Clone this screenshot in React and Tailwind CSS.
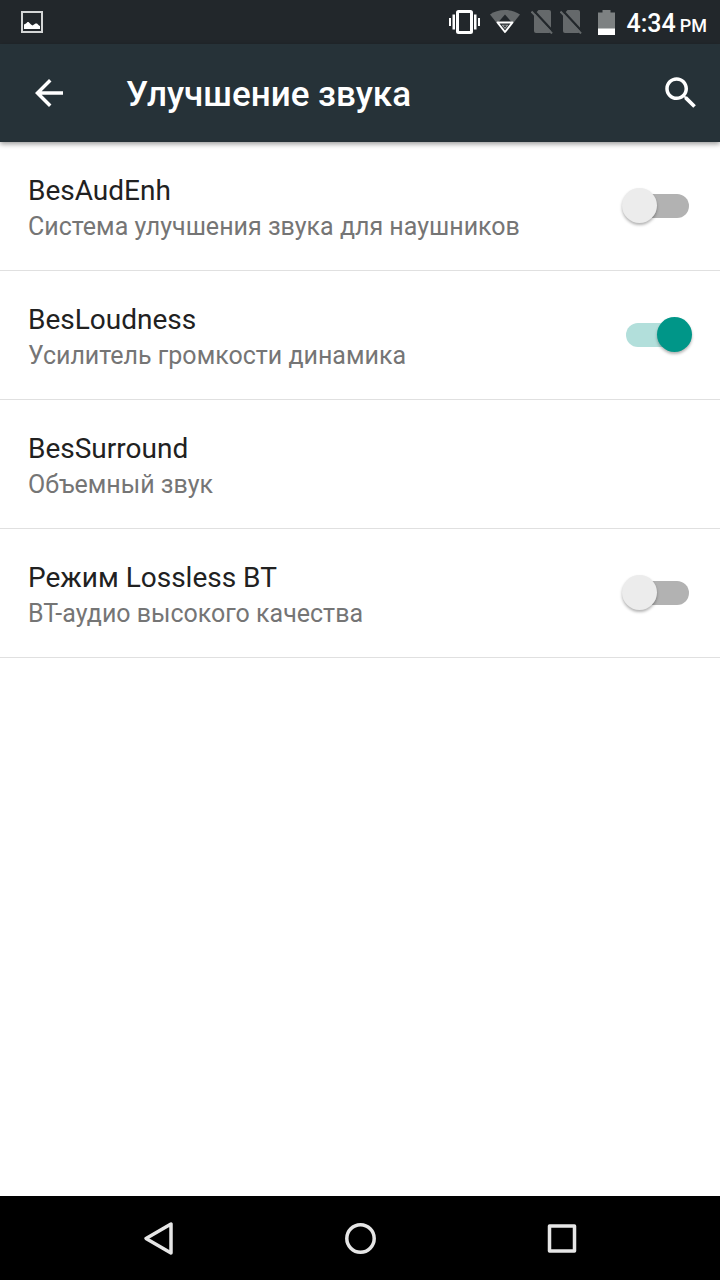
import React, { useState } from "react";

function PictureIcon() {
  return (
    <svg width="22" height="22" viewBox="0 0 22 22" aria-hidden="true">
      <rect x="1" y="1" width="20" height="20" fill="none" stroke="#d4d6d6" strokeWidth="2" />
      <path d="M3 18V13.500l2-1 1.500-1.500h1l2.500 2.500 1.500 1 3-2h1.500l2 2 1 0.500v3z" fill="#fff" />
    </svg>
  );
}

function VibrateIcon() {
  return (
    <svg width="32" height="24" viewBox="0 0 32 24" aria-hidden="true">
      <rect x="8.500" y="1.500" width="14" height="21" rx="1" fill="none" stroke="#fff" strokeWidth="3" />
      <path d="M0 8h2v8H0zM3.500 4.500H6v15H3.500zM25 4.500h2.500v15H25zM29 8h2v8h-2z" fill="#fff" />
    </svg>
  );
}

function WifiIcon() {
  return (
    <svg width="30" height="24" viewBox="0 0 30 24" aria-hidden="true">
      <path d="M0 4.500C4 1.500 9 0 15 0s11 1.500 15 4.500L15 23.500z" fill="#65696b" />
      <path d="M15 4.500l6.500 7.500H24L15 24 6 12h2.500z" fill="#22272b" />
      <path d="M7.500 12.500h15L15 22z" fill="none" stroke="#fff" strokeWidth="2" strokeLinejoin="round" />
      <path d="M11.500 14.800h7L15 19z" fill="#a9acad" />
      <path d="M13.300 15.600h3.400L15 17.500z" fill="#22272b" />
    </svg>
  );
}

function NoSimIcon() {
  return (
    <svg width="22" height="24" viewBox="0 0 22 24" aria-hidden="true">
      <path d="M7.500 0H18q2 0 2 2v19q0 2-2 2H5q-2 0-2-2V5z" fill="#65696b" />
      <path d="M2 0l20 21.500" stroke="#22272b" strokeWidth="2.500" />
      <path d="M0.500 1.500l20.500 22" stroke="#65696b" strokeWidth="2" />
    </svg>
  );
}

function BatteryIcon() {
  return (
    <svg width="17" height="25" viewBox="0 0 17 25" aria-hidden="true">
      <path d="M4.500 0h8v2.500H17V25H0V2.500h4.500z" fill="#7d8182" />
      <path d="M0 18.500h17V25H0z" fill="#fff" />
    </svg>
  );
}

function StatusBar() {
  return (
    <div className="flex h-11 items-center justify-between bg-[#22272b] pl-[21px] pr-[13px] text-white">
      <PictureIcon />
      <div className="flex items-center">
        <VibrateIcon />
        <span className="ml-[9px] flex"><WifiIcon /></span>
        <span className="ml-[11px] flex gap-[7px]">
          <NoSimIcon />
          <NoSimIcon />
        </span>
        <span className="ml-4 flex"><BatteryIcon /></span>
        <span className="ml-3 flex items-baseline gap-1 pt-1.5 font-medium leading-8">
          <span className="text-[25px]">4:34</span>
          <span className="text-[18px]">PM</span>
        </span>
      </div>
    </div>
  );
}

function Toolbar() {
  return (
    <header className="relative flex h-[98px] items-center bg-[#263238] pl-7 pr-[18px] text-white shadow-[0_2px_5px_rgba(0,0,0,0.4)]">
      <button type="button" aria-label="Назад" className="flex size-[42px] items-center justify-center">
        <svg width="42" height="42" viewBox="0 0 24 24" fill="#fff" aria-hidden="true">
          <path d="M20 11H7.830l5.590-5.590L12 4l-8 8 8 8 1.410-1.410L7.830 13H20v-2z" />
        </svg>
      </button>
      <h1 className="ml-14 grow pt-1 text-[35px] font-medium leading-10">Улучшение звука</h1>
      <button type="button" aria-label="Поиск" className="flex size-[42px] items-center justify-center">
        <svg width="42" height="42" viewBox="0 0 24 24" fill="#fff" aria-hidden="true">
          <path d="M15.500 14h-.790l-.280-.270C15.410 12.590 16 11.110 16 9.500 16 5.910 13.090 3 9.500 3S3 5.910 3 9.500 5.910 16 9.500 16c1.610 0 3.090-.590 4.230-1.570l.270.280v.790l5 4.990L20.490 19l-4.990-5zm-6 0C7.010 14 5 11.990 5 9.500S7.010 5 9.500 5 14 7.010 14 9.500 11.990 14 9.500 14z" />
        </svg>
      </button>
    </header>
  );
}

function Switch({ id, checked, onChange }) {
  return (
    <span className="relative flex h-9 w-[70px] items-center">
      <input
        id={id}
        type="checkbox"
        role="switch"
        checked={checked}
        onChange={onChange}
        className="peer ml-1 mr-[3px] h-6 grow cursor-pointer appearance-none rounded-full bg-[#b2b2b2] checked:bg-[#b2dfdb]"
      />
      <span className="pointer-events-none absolute left-0 top-0 size-[35px] rounded-full bg-[#ececec] shadow-[0_2px_3px_rgba(0,0,0,0.3)] peer-checked:left-auto peer-checked:right-0 peer-checked:bg-[#009688]" />
    </span>
  );
}

function Setting({ id, title, summary, initial }) {
  const [on, setOn] = useState(initial);
  const hasSwitch = initial !== undefined;
  const text = (
    <>
      <span className="block text-[28px] text-[#212121]">{title}</span>
      <span className="block text-[25px] text-[#757575]">{summary}</span>
    </>
  );
  return (
    <li className="flex items-center border-b border-[#e0e0e0] px-7">
      {hasSwitch ? (
        <label htmlFor={id} className="grow pb-[25px] pt-[31px] leading-9">{text}</label>
      ) : (
        <button type="button" className="grow pb-[25px] pt-[31px] text-left leading-9">{text}</button>
      )}
      {hasSwitch && <Switch id={id} checked={on} onChange={() => setOn(!on)} />}
    </li>
  );
}

const settings = [
  { id: "headphones", title: "BesAudEnh", summary: "Система улучшения звука для наушников", initial: false },
  { id: "loudness", title: "BesLoudness", summary: "Усилитель громкости динамика", initial: true },
  { id: "surround", title: "BesSurround", summary: "Объемный звук" },
  { id: "lossless", title: "Режим Lossless BT", summary: "BT-аудио высокого качества", initial: false },
];

function NavigationBar() {
  return (
    <nav className="flex h-[84px] items-center justify-center gap-[117px] bg-black">
      <button type="button" aria-label="Назад" className="flex w-21 justify-center">
        <svg width="34" height="36" viewBox="0 0 34 36" fill="none" stroke="#e6e6e6" strokeWidth="3.500" strokeLinejoin="round" aria-hidden="true">
          <path d="M4 18.500L29 4v29z" />
        </svg>
      </button>
      <button type="button" aria-label="Домой" className="flex w-21 justify-center">
        <svg width="34" height="34" viewBox="0 0 34 34" fill="none" stroke="#e6e6e6" strokeWidth="3.500" aria-hidden="true">
          <circle cx="17.500" cy="17.500" r="13.700" />
        </svg>
      </button>
      <button type="button" aria-label="Обзор" className="flex w-21 justify-center">
        <svg width="34" height="34" viewBox="0 0 34 34" fill="none" stroke="#e6e6e6" strokeWidth="3.500" strokeLinejoin="round" aria-hidden="true">
          <rect x="5.500" y="5" width="25" height="25" />
        </svg>
      </button>
    </nav>
  );
}

export default function App() {
  return (
    <div className="flex min-h-screen flex-col bg-white font-[Roboto,sans-serif]">
      <StatusBar />
      <Toolbar />
      <main className="grow">
        <ul>
          {settings.map((item) => (
            <Setting key={item.id} {...item} />
          ))}
        </ul>
      </main>
      <NavigationBar />
    </div>
  );
}
